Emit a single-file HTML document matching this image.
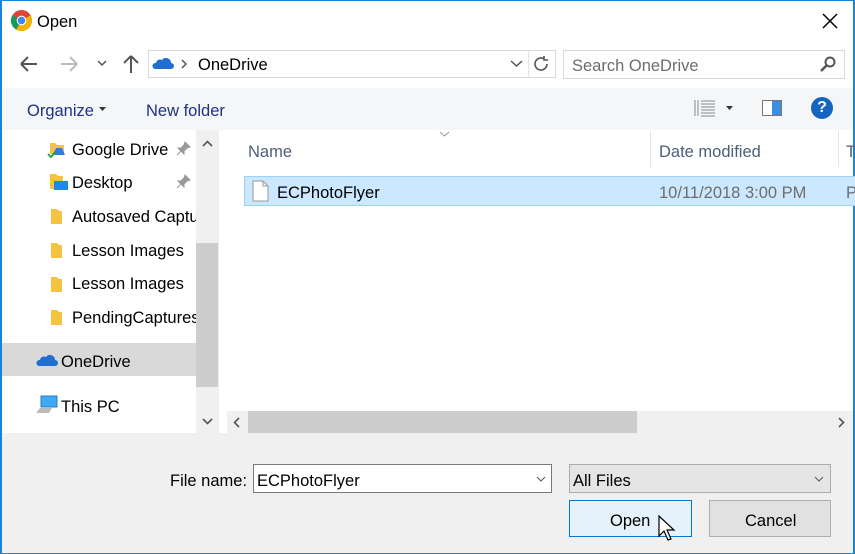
<!DOCTYPE html>
<html><head><style>
*{box-sizing:border-box;margin:0;padding:0}
body{width:855px;height:554px;overflow:hidden;background:#fff;font-family:"Liberation Sans",sans-serif;position:relative;color:#000}
.a{position:absolute}
.t{position:absolute;font-size:16.5px;white-space:nowrap;margin-top:1px}
</style></head><body>
<div class="a" style="left:0;top:0;width:855px;height:554px;border:1px solid #1883d7;border-width:1px 2px 1px 2px"></div>
<!-- title -->
<svg class="a" style="left:11px;top:10px" width="21" height="21" viewBox="0 0 20 20"><circle cx="10" cy="10" r="10" fill="#db4437"/><path d="M10 10 L1.3 5 A10 10 0 0 0 5 18.7Z" fill="#0f9d58"/><path d="M10 10 L5 18.7 A10 10 0 0 0 20 10Z" fill="#f4b400"/><path d="M10 10 L20 10 A10 10 0 0 0 18.7 5Z" fill="#f4b400"/><circle cx="10" cy="10" r="4.6" fill="#fff"/><circle cx="10" cy="10" r="3.6" fill="#4285f4"/></svg>
<div class="t" style="left:37px;top:12px;font-size:16.5px">Open</div>
<svg class="a" style="left:822px;top:13px" width="16" height="16"><path d="M1 1L15 15M15 1L1 15" stroke="#000" stroke-width="1.5"/></svg>
<!-- nav -->
<svg class="a" style="left:19px;top:55px" width="20" height="18"><path d="M2 9H18M2 9L9 2M2 9L9 16" stroke="#555" stroke-width="2" fill="none"/></svg>
<svg class="a" style="left:59px;top:55px" width="20" height="18"><path d="M18 9H2M18 9L11 2M18 9L11 16" stroke="#bbb" stroke-width="2" fill="none"/></svg>
<svg class="a" style="left:97px;top:60px" width="10" height="7"><path d="M1 1L5 5L9 1" stroke="#555" stroke-width="1.5" fill="none"/></svg>
<svg class="a" style="left:122px;top:54px" width="18" height="20"><path d="M9 19V2M9 2L2 9M9 2L16 9" stroke="#555" stroke-width="2" fill="none"/></svg>
<div class="a" style="left:148px;top:50px;width:408px;height:28px;border:1px solid #d9d9d9"></div>
<svg class="a" style="left:152px;top:56px" width="22" height="14"><path d="M3 13H19A3 3 0 0 0 19 7A5 5 0 0 0 10 4A4 4 0 0 0 4 7A3 3 0 0 0 3 13Z" fill="#1e6fd0"/></svg>
<svg class="a" style="left:181px;top:59px" width="7" height="10"><path d="M1 1L5 5L1 9" stroke="#555" stroke-width="1.5" fill="none"/></svg>
<div class="t" style="left:198px;top:55px">OneDrive</div>
<svg class="a" style="left:510px;top:60px" width="13" height="8"><path d="M1 1L6.5 6L12 1" stroke="#555" stroke-width="1.5" fill="none"/></svg>
<div class="a" style="left:528px;top:51px;width:1px;height:26px;background:#e5e5e5"></div>
<svg class="a" style="left:533px;top:55px" width="17" height="18"><path d="M14 9A6 6 0 1 1 11 3.8M11 1V5H15" stroke="#555" stroke-width="1.6" fill="none"/></svg>
<div class="a" style="left:563px;top:50px;width:282px;height:29px;border:1px solid #d9d9d9"></div>
<div class="t" style="left:572px;top:56px;color:#6d6d6d">Search OneDrive</div>
<svg class="a" style="left:819px;top:55px" width="18" height="18"><circle cx="11" cy="7" r="4.5" stroke="#555" stroke-width="2" fill="none"/><path d="M8 10L2 16" stroke="#555" stroke-width="2.5"/></svg>
<!-- toolbar -->
<div class="a" style="left:2px;top:88px;width:851px;height:42px;background:#f5f6f7"></div>
<div class="t" style="left:27px;top:101px;color:#1e3287">Organize</div>
<svg class="a" style="left:99px;top:107px" width="7" height="4"><path d="M0 0H7L3.5 4Z" fill="#333"/></svg>
<div class="t" style="left:146px;top:101px;color:#1e3287">New folder</div>
<svg class="a" style="left:694px;top:99px" width="22" height="18"><g stroke="#888" stroke-width="1"><path d="M1 1V17M4 1V17"/><path d="M7 2H21M7 5H21M7 8H21M7 11H21M7 14H21M7 17H21"/></g></svg>
<svg class="a" style="left:726px;top:106px" width="7" height="4"><path d="M0 0H7L3.5 4Z" fill="#333"/></svg>
<div class="a" style="left:762px;top:100px;width:20px;height:16px;border:1px solid #777;background:linear-gradient(90deg,#fff 50%,#3c8ee0 50%)"></div>
<div class="a" style="left:811px;top:97px;width:22px;height:22px;border-radius:50%;background:#1565c0;color:#fff;font-size:16px;font-weight:bold;text-align:center;line-height:22px">?</div>
<!-- sidebar -->
<div class="a" style="left:2px;top:343px;width:194px;height:33px;background:#d9d9d9"></div>
<svg class="a" style="left:47px;top:140px" width="22" height="20"><path d="M3 3H8L10 5H17V14H3Z" fill="#f5c342"/><path d="M9 8L15 8L18 15H6Z" fill="#2f7de1"/><path d="M1 14L4 17L9 11" stroke="#2a9d3a" stroke-width="1.8" fill="none"/></svg>
<div class="t" style="left:72px;top:140px">Google Drive</div>
<svg class="a" style="left:48px;top:172px" width="22" height="20"><path d="M2 2H8L10 4H15V17H2Z" fill="#f5c342"/><rect x="6" y="9" width="14" height="9" fill="#1e88e5"/></svg>
<div class="t" style="left:72px;top:173px">Desktop</div>
<svg class="a" style="left:176px;top:141px" width="15" height="15"><path d="M9 1L14 6L11 7L8 10L8 13L2 7L5 7L8 4Z M5 10L1 14" fill="#999" stroke="#999"/></svg>
<svg class="a" style="left:176px;top:174px" width="15" height="15"><path d="M9 1L14 6L11 7L8 10L8 13L2 7L5 7L8 4Z M5 10L1 14" fill="#999" stroke="#999"/></svg>
<svg class="a" style="left:50px;top:207px" width="14" height="18"><path d="M1 2H7L9 4H12V17H1Z" fill="#f5c342"/></svg>
<div class="t" style="left:72px;top:207px">Autosaved Captu</div>
<svg class="a" style="left:50px;top:241px" width="14" height="18"><path d="M1 2H7L9 4H12V17H1Z" fill="#f5c342"/></svg>
<div class="t" style="left:72px;top:241px">Lesson Images</div>
<svg class="a" style="left:50px;top:275px" width="14" height="18"><path d="M1 2H7L9 4H12V17H1Z" fill="#f5c342"/></svg>
<div class="t" style="left:72px;top:274px">Lesson Images</div>
<svg class="a" style="left:50px;top:308px" width="14" height="18"><path d="M1 2H7L9 4H12V17H1Z" fill="#f5c342"/></svg>
<div class="t" style="left:72px;top:308px">PendingCaptures</div>
<svg class="a" style="left:36px;top:353px" width="22" height="14"><path d="M3 13H19A3 3 0 0 0 19 7A5 5 0 0 0 10 4A4 4 0 0 0 4 7A3 3 0 0 0 3 13Z" fill="#1e6fd0"/></svg>
<div class="t" style="left:61px;top:352px">OneDrive</div>
<svg class="a" style="left:35px;top:395px" width="24" height="20"><rect x="6" y="1" width="16" height="11" fill="#3fa9f5" stroke="#2a7fc0"/><path d="M1 18L5 13H17L14 18Z" fill="#bbb"/></svg>
<div class="t" style="left:61px;top:397px">This PC</div>
<div class="a" style="left:196px;top:130px;width:23px;height:303px;background:#f0f0f0"></div>
<div class="a" style="left:196px;top:243px;width:22px;height:144px;background:#cdcdcd"></div>
<svg class="a" style="left:202px;top:140px" width="11" height="7"><path d="M1 6L5.5 1.5L10 6" stroke="#555" stroke-width="1.6" fill="none"/></svg>
<svg class="a" style="left:202px;top:418px" width="11" height="7"><path d="M1 1L5.5 5.5L10 1" stroke="#555" stroke-width="1.6" fill="none"/></svg>
<!-- content -->
<svg class="a" style="left:439px;top:131px" width="11" height="6"><path d="M1 1L5.5 5L10 1" stroke="#999" stroke-width="1" fill="none"/></svg>
<div class="t" style="left:248px;top:142px;color:#4c607a">Name</div>
<div class="a" style="left:650px;top:131px;width:1px;height:36px;background:#e5e5e5"></div>
<div class="t" style="left:659px;top:142px;color:#4c607a">Date modified</div>
<div class="a" style="left:838px;top:131px;width:1px;height:36px;background:#e5e5e5"></div>
<div class="t" style="left:846px;top:142px;color:#4c607a">T</div>
<div class="a" style="left:244px;top:176px;width:611px;height:30px;background:#cce8ff;border:1px solid #99d1ff;border-right:none"></div>
<svg class="a" style="left:252px;top:180px" width="17" height="22"><path d="M1 1H11L16 6V21H1Z" fill="#fff" stroke="#999"/><path d="M11 1V6H16" fill="none" stroke="#999"/></svg>
<div class="t" style="left:277px;top:183px">ECPhotoFlyer</div>
<div class="t" style="left:659px;top:183px;color:#6d6d6d">10/11/2018 3:00 PM</div>
<div class="t" style="left:846px;top:183px;color:#6d6d6d">P</div>
<div class="a" style="left:227px;top:411px;width:626px;height:22px;background:#f0f0f0"></div>
<div class="a" style="left:248px;top:411px;width:389px;height:22px;background:#cdcdcd"></div>
<svg class="a" style="left:233px;top:417px" width="7" height="11"><path d="M6 1L1.5 5.5L6 10" stroke="#555" stroke-width="1.6" fill="none"/></svg>
<svg class="a" style="left:838px;top:417px" width="7" height="11"><path d="M1 1L5.5 5.5L1 10" stroke="#555" stroke-width="1.6" fill="none"/></svg>
<!-- bottom -->
<div class="a" style="left:2px;top:433px;width:851px;height:120px;background:#f0f0f0"></div>
<div class="t" style="left:170px;top:471px">File name:</div>
<div class="a" style="left:253px;top:464px;width:299px;height:29px;background:#fff;border:1px solid #7a7a7a"></div>
<div class="t" style="left:257px;top:471px">ECPhotoFlyer</div>
<svg class="a" style="left:536px;top:476px" width="10" height="6"><path d="M1 1L5 5L9 1" stroke="#555" stroke-width="1" fill="none"/></svg>
<div class="a" style="left:569px;top:464px;width:262px;height:29px;background:#e5e5e5;border:1px solid #adadad"></div>
<div class="t" style="left:573px;top:471px">All Files</div>
<svg class="a" style="left:814px;top:476px" width="10" height="6"><path d="M1 1L5 5L9 1" stroke="#555" stroke-width="1" fill="none"/></svg>
<div class="a" style="left:569px;top:500px;width:123px;height:37px;background:#e5f1fb;border:1px solid #0078d7"></div>
<div class="t" style="left:610px;top:511px">Open</div>
<svg class="a" style="left:658px;top:515px" width="20" height="28"><path d="M1 1V21L6 16L10 25L13 24L9 15H16Z" fill="#fff" stroke="#000" stroke-width="1.2"/></svg>
<div class="a" style="left:709px;top:500px;width:122px;height:37px;background:#e1e1e1;border:1px solid #adadad"></div>
<div class="t" style="left:745px;top:511px">Cancel</div>
</body></html>
